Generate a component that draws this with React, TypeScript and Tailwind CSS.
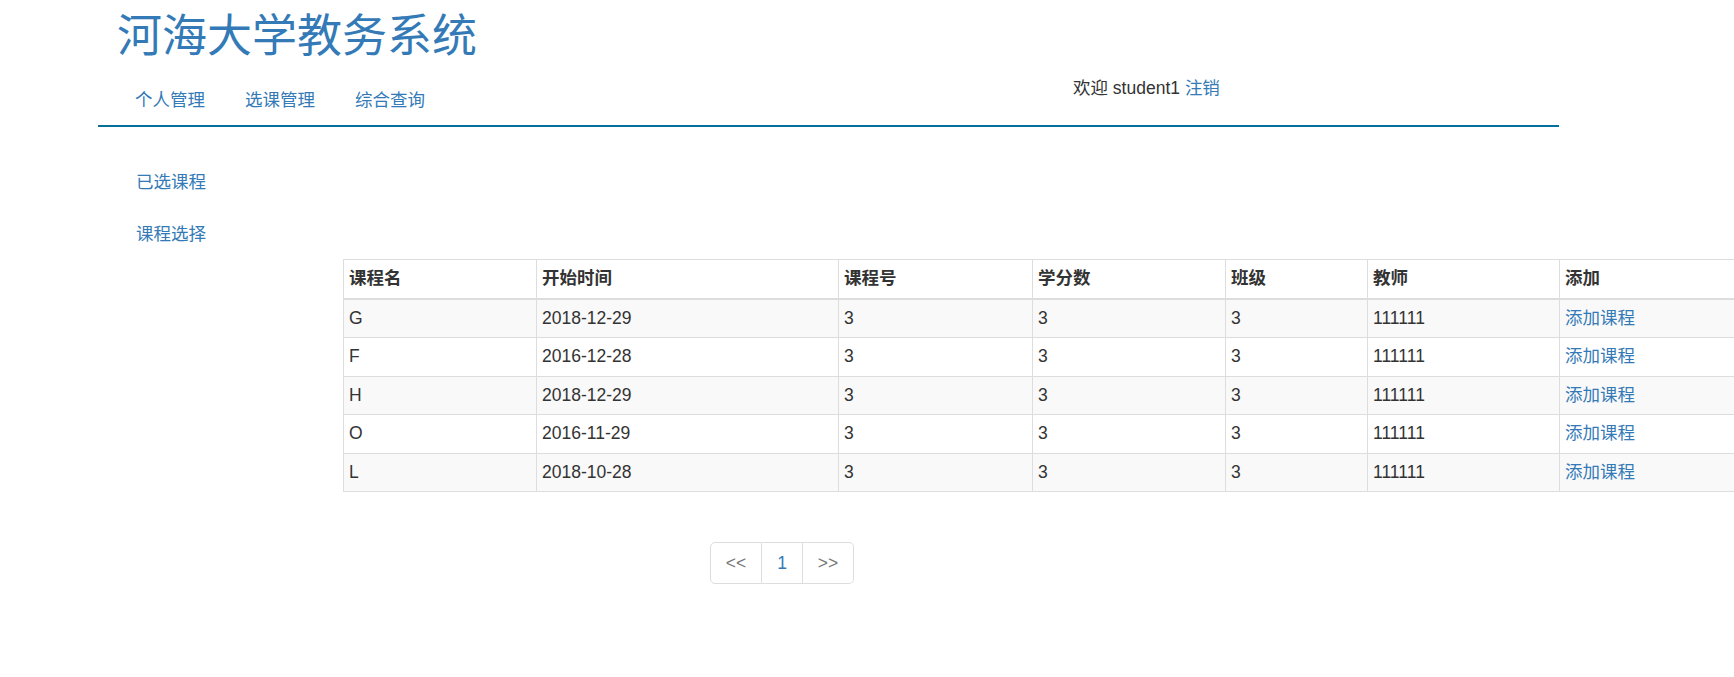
import React from "react"

const font = { fontFamily: '"Liberation Sans", "Noto Sans CJK SC", sans-serif' }

const courses = [
  { name: "G", start: "2018-12-29", no: "3", credit: "3", cls: "3", teacher: "111111" },
  { name: "F", start: "2016-12-28", no: "3", credit: "3", cls: "3", teacher: "111111" },
  { name: "H", start: "2018-12-29", no: "3", credit: "3", cls: "3", teacher: "111111" },
  { name: "O", start: "2016-11-29", no: "3", credit: "3", cls: "3", teacher: "111111" },
  { name: "L", start: "2018-10-28", no: "3", credit: "3", cls: "3", teacher: "111111" },
]

const headers = ["课程名", "开始时间", "课程号", "学分数", "班级", "教师", "添加"]
const widths = ["w-[193px]", "w-[302px]", "w-[194px]", "w-[193px]", "w-[142px]", "w-[192px]", "w-[260px]"]

export default function App() {
  return (
    <div className="w-[1734px] h-[677px] overflow-hidden bg-white text-[#333] text-[17.5px]" style={font}>
      {/* header */}
      <div className="ml-[98px] w-[1461px] border-b-2 border-[#07709a]">
        <h1 className="pl-[19px] pt-[12px] h-[62px] text-[45px] leading-[50px] font-normal text-[#337ab7]">
          河海大学教务系统
        </h1>
        <div className="flex">
          <div className="w-[975px] flex pl-[17px] pt-[26px] pb-[12px]">
            {["个人管理", "选课管理", "综合查询"].map((item) => (
              <a key={item} href="#" className="px-[20px] leading-[25px] text-[#337ab7]">
                {item}
              </a>
            ))}
          </div>
          <div className="pt-[14px] leading-[25px]">
            欢迎 student1 <a href="#" className="text-[#337ab7]">注销</a>
          </div>
        </div>
      </div>

      {/* body */}
      <div className="flex ml-[98px]">
        <div className="w-[245px] shrink-0 pl-[19px] pt-[30px]">
          <a href="#" className="block px-[19px] py-[12.5px] leading-[25px] text-[#337ab7]">
            已选课程
          </a>
          <a href="#" className="block mt-[2.5px] px-[19px] py-[12.5px] leading-[25px] text-[#337ab7]">
            课程选择
          </a>
        </div>
        <div className="shrink-0 pt-[132px]">
          <table className="border-collapse table-fixed">
            <thead>
              <tr>
                {headers.map((h, i) => (
                  <th
                    key={h}
                    className={`${widths[i]} border border-[#ddd] border-b-2 px-[5px] py-[6.25px] leading-[25px] text-left font-bold`}
                  >
                    {h}
                  </th>
                ))}
              </tr>
            </thead>
            <tbody>
              {courses.map((c, i) => (
                <tr key={i} className={i % 2 === 0 ? "bg-[#f9f9f9]" : "bg-white"}>
                  {[c.name, c.start, c.no, c.credit, c.cls, c.teacher].map((v, j) => (
                    <td key={j} className="border border-[#ddd] px-[5px] py-[6.25px] leading-[25px]">
                      {v}
                    </td>
                  ))}
                  <td className="border border-[#ddd] px-[5px] py-[6.25px] leading-[25px]">
                    <a href="#" className="text-[#337ab7]">添加课程</a>
                  </td>
                </tr>
              ))}
            </tbody>
          </table>

          <div className="mt-[50px] ml-[367px] flex">
            <span className="w-[52px] h-[42px] flex items-center justify-center border border-[#ddd] rounded-l-[5px] text-[#777]">
              &lt;&lt;
            </span>
            <span className="w-[41px] h-[42px] flex items-center justify-center border border-l-0 border-[#ddd] text-[#337ab7]">
              1
            </span>
            <span className="w-[51px] h-[42px] flex items-center justify-center border border-l-0 border-[#ddd] rounded-r-[5px] text-[#777]">
              &gt;&gt;
            </span>
          </div>
        </div>
      </div>
    </div>
  )
}
